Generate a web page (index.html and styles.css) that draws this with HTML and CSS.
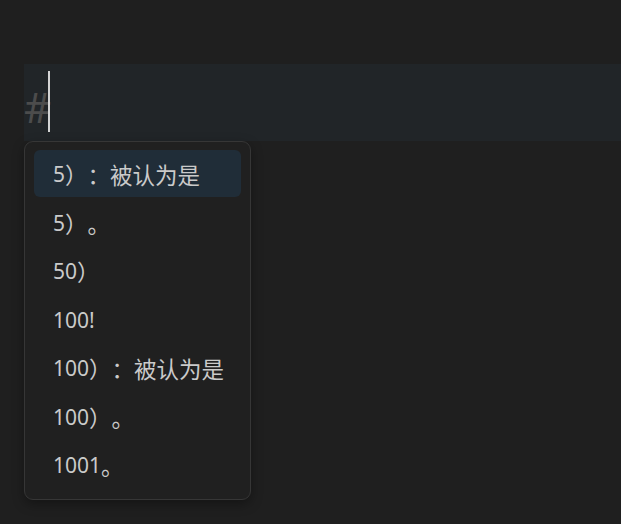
FILE: index.html
```html
<!DOCTYPE html>
<html lang="zh">
<head>
<meta charset="utf-8">
<link rel="stylesheet" href="styles.css">
</head>
<body>
<div class="editor">
  <div class="line">
    <span class="hash">#</span><span class="cursor"></span>
  </div>
  <div class="suggest">
    <div class="item selected">5<span class="cjk">）：被认为是</span></div>
    <div class="item">5<span class="cjk">）。</span></div>
    <div class="item">50<span class="cjk">）</span></div>
    <div class="item">100!</div>
    <div class="item">100<span class="cjk">）：被认为是</span></div>
    <div class="item">100<span class="cjk">）。</span></div>
    <div class="item">1001<span class="cjk">。</span></div>
  </div>
</div>
</body>
</html>
```
FILE: styles.css
```css
html, body {
  margin: 0;
  padding: 0;
  background: #1f1f1f;
  width: 621px;
  height: 524px;
  overflow: hidden;
}
.editor {
  padding: 64px 0 0 24px;
}
.line {
  height: 77px;
  background: #212528;
  display: flex;
  align-items: center;
}
.hash {
  font-family: "Noto Sans", sans-serif;
  font-size: 42px;
  line-height: 1;
  color: #4c4c4c;
  margin-top: 8px;
  width: 24px;
}
.cursor {
  width: 2px;
  height: 61px;
  background: #d4d4d4;
  margin-top: -2px;
}
.suggest {
  width: 207px;
  margin-top: 0;
  background: #202020;
  border: 1px solid #363636;
  border-radius: 9px;
  padding: 8px 9px 9px;
  box-shadow: 0 4px 12px rgba(0, 0, 0, 0.35);
  display: flex;
  flex-direction: column;
}
.item {
  height: 48.5px;
  display: flex;
  align-items: center;
  padding-left: 19px;
  font-family: "Noto Sans", "Noto Sans CJK SC", sans-serif;
  font-size: 21px;
  color: #cacaca;
  border-radius: 6px;
  white-space: nowrap;
  text-spacing-trim: space-all;
}
.cjk {
  font-family: "Noto Sans CJK SC", sans-serif;
  font-size: 22.5px;
  text-spacing-trim: space-all;
}
.item.selected {
  height: 47px;
  margin-bottom: 1.5px;
  background: #202d38;
}
```
